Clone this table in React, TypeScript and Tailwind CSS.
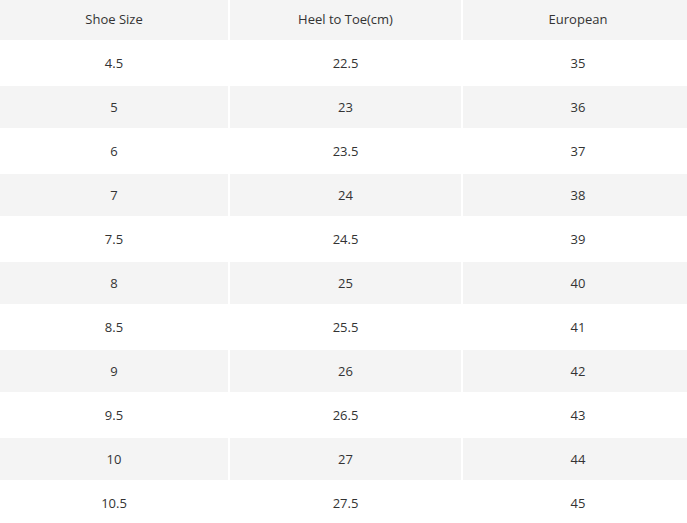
const rows = [
  ["4.5", "22.5", "35"],
  ["5", "23", "36"],
  ["6", "23.5", "37"],
  ["7", "24", "38"],
  ["7.5", "24.5", "39"],
  ["8", "25", "40"],
  ["8.5", "25.5", "41"],
  ["9", "26", "42"],
  ["9.5", "26.5", "43"],
  ["10", "27", "44"],
  ["10.5", "27.5", "45"],
];

const headers = ["Shoe Size", "Heel to Toe(cm)", "European"];

export default function App() {
  return (
    <div
      className="w-[687px] h-[523px] overflow-hidden bg-white text-[13px] text-[#333]"
      style={{ fontFamily: '"Open Sans", "Liberation Sans", sans-serif' }}
    >
      <div className="grid w-[693px] grid-cols-[228px_231px_230px] gap-[2px]">
        {headers.map((h) => (
          <div key={h} className="h-[40px] flex items-center justify-center bg-[#f4f4f4]">
            {h}
          </div>
        ))}
        {rows.map((row, i) =>
          row.map((cell, j) => (
            <div
              key={`${i}-${j}`}
              className={`h-[42px] pt-[2px] flex items-center justify-center ${i % 2 === 1 ? "bg-[#f4f4f4]" : "bg-white"}`}
            >
              {cell}
            </div>
          ))
        )}
      </div>
    </div>
  );
}
